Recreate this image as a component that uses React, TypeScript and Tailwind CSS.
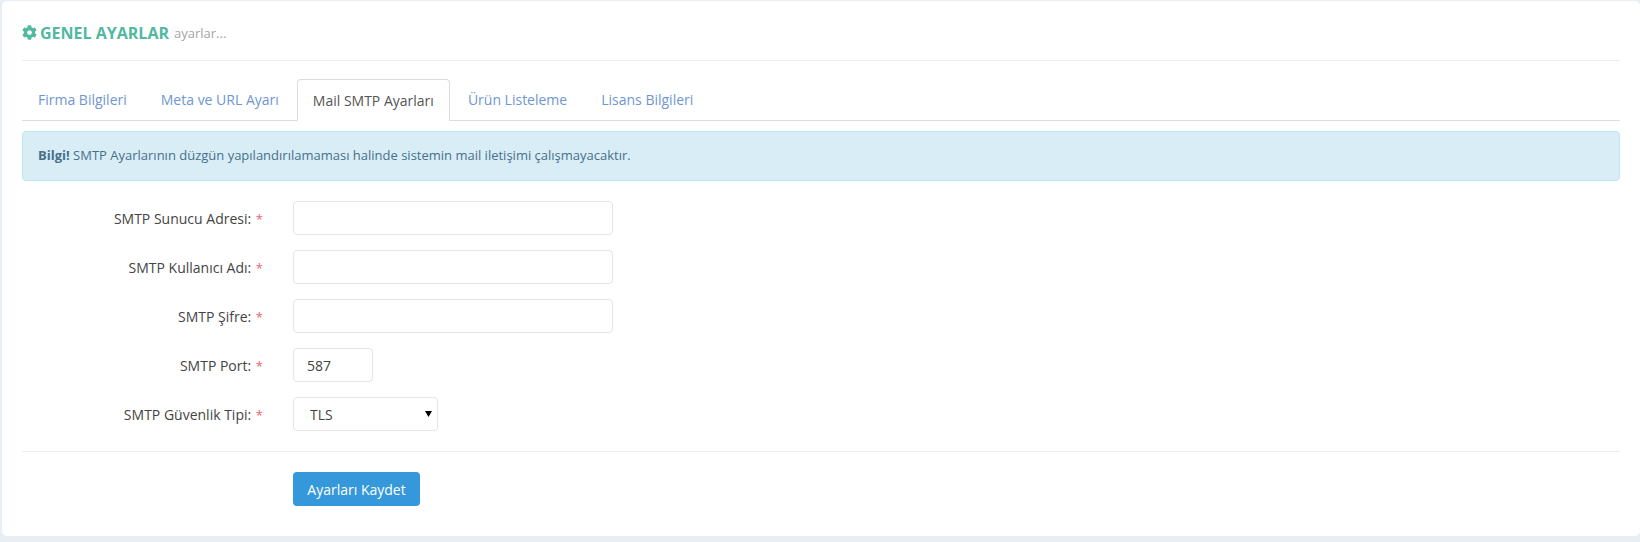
import React from 'react';
import { FaCog } from 'react-icons/fa';

const tabs = ['Firma Bilgileri', 'Meta ve URL Ayarı', 'Mail SMTP Ayarları', 'Ürün Listeleme', 'Lisans Bilgileri'];

const FormRow: React.FC<{ label: string; children: React.ReactNode }> = ({ label, children }) => (
  <div className="flex items-center h-[34px] mb-[15px]">
    <label className="w-[241px] text-right text-[14px] text-[#444] pt-[2px]">
      {label} <span className="text-[13px] text-[#e8636f] ml-[1px]">*</span>
    </label>
    <div className="ml-[30px]">{children}</div>
  </div>
);

const inputClass =
  'h-[34px] block bg-white border border-[#e5e5e5] rounded-[4px] px-[13px] text-[14px] text-[#444] outline-none';

const App: React.FC = () => {
  return (
    <div className="h-[542px] bg-[#e9edf4] pl-[2px] pt-[1px] font-['Open_Sans',sans-serif] overflow-hidden">
      <div className="h-[535px] bg-white rounded-[5px] pl-[20px] pr-[20px]">
        <div className="h-[60px] border-b border-[#eeeeee] flex items-center pt-[4px]">
          <FaCog className="text-[#52b8a0] text-[15px] mr-[3px]" />
          <span className="text-[16px] font-bold text-[#52b8a0]">GENEL AYARLAR</span>
          <span className="text-[13px] text-[#a5a5a5] ml-[5px] mt-[2px]">ayarlar...</span>
        </div>

        <nav className="flex mt-[18px] h-[42px] border-b border-[#dddddd]">
          {tabs.map((tab, i) =>
            i === 2 ? (
              <div
                key={tab}
                className="h-[42px] px-[15px] mr-[2px] flex items-center bg-white border border-[#dddddd] border-b-white rounded-t-[4px] text-[14px] text-[#555]"
              >
                {tab}
              </div>
            ) : (
              <div key={tab} className="h-[41px] px-[16px] mr-[2px] flex items-center text-[14px] text-[#6f96d1]">
                {tab}
              </div>
            )
          )}
        </nav>

        <div className="mt-[10px] h-[50px] flex items-center px-[15px] bg-[#d9edf7] border border-[#bce8f1] rounded-[4px] text-[13px] text-[#46708a]">
          <p>
            <strong>Bilgi!</strong> SMTP Ayarlarının düzgün yapılandırılamaması halinde sistemin mail iletişimi çalışmayacaktır.
          </p>
        </div>

        <form className="mt-[20px]">
          <FormRow label="SMTP Sunucu Adresi:">
            <input className={`${inputClass} w-[320px]`} />
          </FormRow>
          <FormRow label="SMTP Kullanıcı Adı:">
            <input className={`${inputClass} w-[320px]`} />
          </FormRow>
          <FormRow label="SMTP Şifre:">
            <input className={`${inputClass} w-[320px]`} />
          </FormRow>
          <FormRow label="SMTP Port:">
            <input className={`${inputClass} w-[80px]`} defaultValue="587" />
          </FormRow>
          <FormRow label="SMTP Güvenlik Tipi:">
            <div className="relative w-[145px]">
              <select className={`${inputClass} w-[145px] appearance-none pl-[16px]`} defaultValue="TLS">
                <option>TLS</option>
                <option>SSL</option>
              </select>
              <svg className="absolute right-[6px] top-[14px] pointer-events-none" width="7" height="6" viewBox="0 0 7 6">
                <path d="M0 0h7L3.5 6z" fill="#000" />
              </svg>
            </div>
          </FormRow>

          <div className="border-t border-[#eeeeee] mt-[20px] pt-[20px] pl-[271px]">
            <button
              type="button"
              className="h-[34px] w-[127px] bg-[#3498db] text-white text-[14px] rounded-[4px]"
            >
              Ayarları Kaydet
            </button>
          </div>
        </form>
      </div>
    </div>
  );
};

export default App;
